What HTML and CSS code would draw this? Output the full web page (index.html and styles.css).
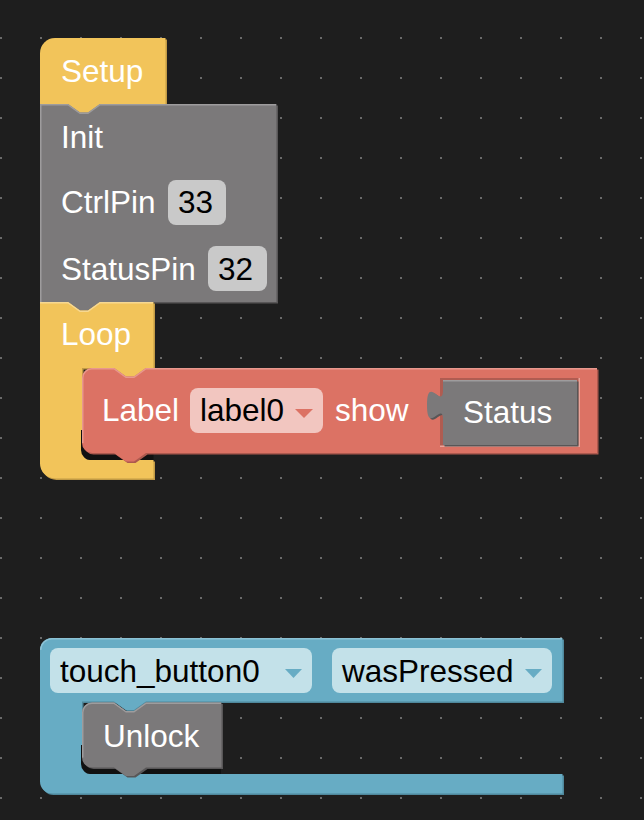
FILE: index.html
```html
<!DOCTYPE html>
<html lang="en">
<head>
<meta charset="utf-8">
<title>Blocks workspace</title>
<link rel="stylesheet" href="styles.css">
</head>
<body>
<svg class="ws" width="644" height="820" viewBox="0 0 644 820" xmlns="http://www.w3.org/2000/svg">
  <defs>
    <pattern id="grid" patternUnits="userSpaceOnUse" x="0" y="-3" width="40" height="40">
      <rect class="dot" x="0" y="0" width="2" height="2"/>
    </pattern>
    <path id="p-setup" d="M40,53 A15,15 0 0 1 55,38 H165.5 V115 H40 Z"/>
    <path id="p-init" d="M40,104 H68 L80,112.5 H88 L100,104 H276.5 V302 H100 L88,310.5 H80 L68,302 H40 Z"/>
    <path id="p-loop" d="M40,302 H68 L80,310.5 H88 L100,302 H153.5 V368 H146 L134,376.5 H126 L114,368 H82 V452 A8,8 0 0 0 90,460 H153.5 V478.5 H55 A15,15 0 0 1 40,463.5 Z"/>
    <path id="p-label" d="M82,378 A10,10 0 0 1 92,368 H114 L126,376.5 H134 L146,368 H597 V453 H146 L134,461.5 H126 L114,453 H92 A10,10 0 0 1 82,443 Z"/>
    <path id="p-status" d="M443,380 H577 V445 H443 V420 c0,-20 -16,16 -16,-15 s16,5 16,-15 Z"/>
    <path id="p-touch" d="M40,650 A12,12 0 0 1 52,638 H562.5 V701.5 H146 L134,710 H126 L114,701.5 H82 V766 A8,8 0 0 0 90,774 H562.5 V793.5 H52 A12,12 0 0 1 40,781.5 Z"/>
    <path id="p-unlock" d="M82,712.5 A10,10 0 0 1 92,702.5 H114 L126,711 H134 L146,702.5 H221.5 V767.5 H146 L134,776 H126 L114,767.5 H92 A10,10 0 0 1 82,757.5 Z"/>
  </defs>

  <rect class="bg" x="0" y="0" width="644" height="820"/>
  <rect x="0" y="0" width="644" height="820" fill="url(#grid)"/>

  <!-- Setup -->
  <use href="#p-setup" class="y-dk" transform="translate(1.5,1.5)"/>
  <use href="#p-setup" class="y-main"/>
  <text class="t" x="61" y="82">Setup</text>

  <!-- Init / pins -->
  <use href="#p-init" class="g-dk" transform="translate(1.5,1.5)"/>
  <use href="#p-init" class="g-main"/>
  <path class="g-hl" d="M40.75,302 V104.75 H68 L80,113.25 H88 L100,104.75 H276"/>
  <text class="t" x="61" y="148">Init</text>
  <text class="t" x="61" y="213">CtrlPin</text>
  <rect class="f-gray" x="168" y="180" width="58" height="45" rx="8"/>
  <text class="t ft" x="178" y="213">33</text>
  <text class="t" x="61" y="280">StatusPin</text>
  <rect class="f-gray" x="208" y="246" width="59" height="45" rx="8"/>
  <text class="t ft" x="218" y="280">32</text>

  <!-- Loop -->
  <use href="#p-loop" class="y-dk" transform="translate(1.5,1.5)"/>
  <use href="#p-loop" class="y-main"/>
  <path class="y-hl" d="M40,302.75 H68 L80,311.25 H88 L100,302.75 H153"/>
  <text class="t" x="61" y="345">Loop</text>

  <!-- Label block -->
  <path class="shadow" d="M81,430 V450 A10,10 0 0 0 91,460 H153.5 V430 Z"/>
  <use href="#p-label" class="r-dk" transform="translate(1.5,1.5)"/>
  <use href="#p-label" class="r-main"/>
  <path class="r-hl" d="M82.75,443 V378 A9.25,9.25 0 0 1 92,368.75 H114 L126,377.25 H134 L146,368.75 H597"/>
  <text class="t" x="102" y="421">Label</text>
  <rect class="f-pink" x="190" y="388" width="133" height="45" rx="8"/>
  <text class="t ft" x="200" y="421">label0</text>
  <polygon class="arrow-r" points="295,409 313,409 304,418"/>
  <text class="t" x="335" y="421">show</text>
  <rect class="slot-lt" x="440" y="378" width="140" height="69"/>
  <rect class="slot-dk" x="440" y="378" width="138.5" height="67.5"/>
  <use href="#p-status" class="g-dk" transform="translate(1.5,1.5)"/>
  <use href="#p-status" class="g-main"/>
  <path class="g-hl" d="M443,380.75 H577"/>
  <text class="t" x="463" y="423">Status</text>

  <!-- touch_button -->
  <use href="#p-touch" class="b-dk" transform="translate(1.5,1.5)"/>
  <use href="#p-touch" class="b-main"/>
  <path class="b-hl" d="M40.75,650 A11.25,11.25 0 0 1 52,638.75 H562"/>
  <rect class="f-blue" x="50" y="648" width="262" height="45" rx="8"/>
  <text class="t ft" x="60" y="682">touch_button0</text>
  <polygon class="arrow-b" points="285,669 302,669 293.5,678"/>
  <rect class="f-blue" x="332" y="648" width="220" height="45" rx="8"/>
  <text class="t ft" x="342" y="682">wasPressed</text>
  <polygon class="arrow-b" points="525,669 542,669 533.5,678"/>

  <!-- Unlock -->
  <path class="shadow" d="M81,745 V764 A10,10 0 0 0 91,774 H221 V745 Z"/>
  <use href="#p-unlock" class="g-dk" transform="translate(1.5,1.5)"/>
  <use href="#p-unlock" class="g-main"/>
  <path class="g-hl" d="M82.75,757.5 V712.5 A9.25,9.25 0 0 1 92,703.25 H114 L126,711.75 H134 L146,703.25 H221"/>
  <text class="t" x="103" y="747">Unlock</text>
</svg>
</body>
</html>
```

FILE: styles.css
```css
html, body {
  margin: 0;
  padding: 0;
  background: #1e1e1e;
  overflow: hidden;
}

.ws {
  display: block;
}

.bg { fill: #1e1e1e; }
.dot { fill: #6a6a6a; }

.t {
  font-family: "Liberation Sans", Arial, sans-serif;
  font-size: 31.5px;
  fill: #ffffff;
}
.ft { fill: #000000; }

.shadow { fill: #111111; }

/* yellow blocks */
.y-main { fill: #f2c45a; }
.y-dk { fill: #c19a45; }
.y-hl { fill: none; stroke: #f7d891; stroke-width: 1.5; }

/* gray blocks */
.g-main { fill: #7b797a; }
.g-dk { fill: #585657; }
.g-hl { fill: none; stroke: #9e9c9d; stroke-width: 1.5; }

/* red blocks */
.r-main { fill: #dc7264; }
.r-dk { fill: #ad594e; }
.r-hl { fill: none; stroke: #e8988e; stroke-width: 1.5; }

/* blue blocks */
.b-main { fill: #67acc4; }
.b-dk { fill: #4f889c; }
.b-hl { fill: none; stroke: #8cc2d5; stroke-width: 1.5; }

/* fields */
.f-gray { fill: #c9c9c9; }
.f-pink { fill: #f2c6c0; }
.f-blue { fill: #c3e1e9; }

.arrow-r { fill: #dc7264; }
.arrow-b { fill: #67acc4; }

.slot-lt { fill: #eba49a; }
.slot-dk { fill: #b05c51; }
```
